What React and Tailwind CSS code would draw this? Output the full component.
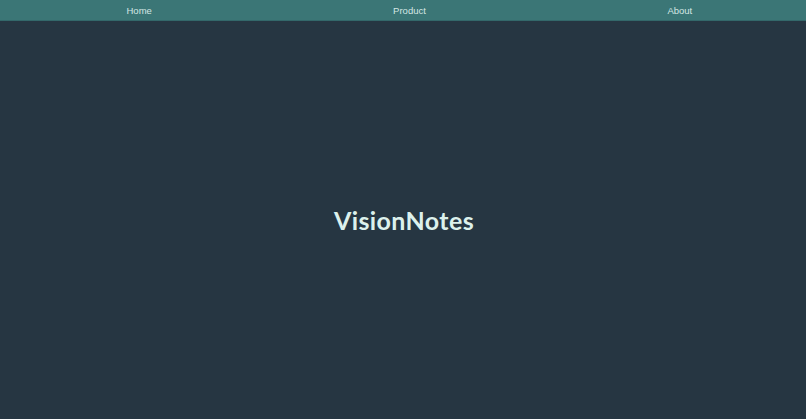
export default function App() {
  return (
    <div className="h-[419px] w-full overflow-hidden bg-[#263642] flex flex-col" style={{ fontFamily: '"Liberation Sans", Arial, sans-serif' }}>
      <nav className="h-[21px] w-[815px] shrink-0 bg-[#3b7676] border-b border-[#33686a] grid grid-cols-3 pl-[4px] pt-[3px] items-center text-[9.5px] text-[#d4e6e4]">
        <a className="text-center">Home</a>
        <a className="text-center">Product</a>
        <a className="text-center">About</a>
      </nav>
      <main className="flex-1 flex items-center justify-center">
        <h1 className="text-[25px] font-bold tracking-[0.4px] text-[#dcf1ec] pt-[2px] pl-[2px]" style={{ fontFamily: 'Lato, "Open Sans", sans-serif' }}>
          VisionNotes
        </h1>
      </main>
    </div>
  );
}
